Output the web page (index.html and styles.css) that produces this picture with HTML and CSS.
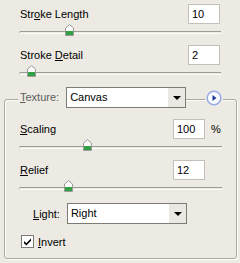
FILE: index.html
```html
<!DOCTYPE html>
<html>
<head>
    <title>Rough Pastels</title>
    <link rel="stylesheet" href="styles.css">
</head>
<body>
    <div class="panel">
        <div class="param">
            <div class="row">
                <label>Str<u>o</u>ke Length</label>
                <input class="num" type="text" value="10">
            </div>
            <div class="slider">
                <div class="track"></div>
                <span class="thumb" style="left: 46px"><svg width="9" height="12" viewBox="0 0 9 12"><path d="M4.5 .6 L8.5 4 V11.5 H.5 V4 Z" fill="#fafafa" stroke="#9a9a96"/><rect x="1" y="7" width="7" height="4" fill="#33a046"/></svg></span>
            </div>
        </div>
        <div class="param">
            <div class="row">
                <label>Stroke <u>D</u>etail</label>
                <input class="num" type="text" value="2">
            </div>
            <div class="slider">
                <div class="track"></div>
                <span class="thumb" style="left: 8px"><svg width="9" height="12" viewBox="0 0 9 12"><path d="M4.5 .6 L8.5 4 V11.5 H.5 V4 Z" fill="#fafafa" stroke="#9a9a96"/><rect x="1" y="7" width="7" height="4" fill="#33a046"/></svg></span>
            </div>
        </div>

        <div class="group">
            <div class="group-head">
                <span class="legend"><u>T</u>exture:</span>
                <div class="select">
                    <span class="select-value">Canvas</span>
                    <span class="select-arrow"></span>
                </div>
                <span class="spacer"></span>
                <span class="menu-btn">
                    <svg width="16" height="16" viewBox="0 0 16 16">
                        <circle cx="8" cy="8" r="6.8" fill="#fbfcff" stroke="#93aae4" stroke-width="1.4"/>
                        <path d="M6.5 5 L10.5 8 L6.5 11 Z" fill="#1b3a9c"/>
                    </svg>
                </span>
            </div>

            <div class="param first">
                <div class="row">
                    <label><u>S</u>caling</label>
                    <div class="num-wrap">
                        <input class="num" type="text" value="100">
                        <span class="unit">%</span>
                    </div>
                </div>
                <div class="slider">
                    <div class="track"></div>
                    <span class="thumb" style="left: 64px"><svg width="9" height="12" viewBox="0 0 9 12"><path d="M4.5 .6 L8.5 4 V11.5 H.5 V4 Z" fill="#fafafa" stroke="#9a9a96"/><rect x="1" y="7" width="7" height="4" fill="#33a046"/></svg></span>
                </div>
            </div>
            <div class="param">
                <div class="row">
                    <label><u>R</u>elief</label>
                    <div class="num-wrap">
                        <input class="num" type="text" value="12">
                        <span class="unit"></span>
                    </div>
                </div>
                <div class="slider">
                    <div class="track"></div>
                    <span class="thumb" style="left: 45px"><svg width="9" height="12" viewBox="0 0 9 12"><path d="M4.5 .6 L8.5 4 V11.5 H.5 V4 Z" fill="#fafafa" stroke="#9a9a96"/><rect x="1" y="7" width="7" height="4" fill="#33a046"/></svg></span>
                </div>
            </div>

            <div class="light-row">
                <label><u>L</u>ight:</label>
                <div class="select">
                    <span class="select-value">Right</span>
                    <span class="select-arrow"></span>
                </div>
            </div>

            <div class="check-row">
                <span class="checkbox">
                    <svg width="11" height="11" viewBox="0 0 11 11">
                        <path d="M2 5 L4.3 7.3 L9 2.5 L9 4.8 L4.3 9.5 L2 7.2 Z" fill="#000"/>
                    </svg>
                </span>
                <label><u>I</u>nvert</label>
            </div>
        </div>
    </div>
</body>
</html>
```

FILE: styles.css
```css
body {
    margin: 0;
    padding: 0;
    font-family: "Liberation Sans", Arial, sans-serif;
    font-size: 11px;
    color: #000;
    background-color: #eceae3;
    overflow: hidden;
}

u {
    text-underline-offset: 1px;
}

.panel {
    width: 240px;
    height: 263px;
    box-sizing: border-box;
    padding: 4px 19px 0 19px;
}

.param {
    display: flex;
    flex-direction: column;
}

.row {
    display: flex;
    justify-content: space-between;
    align-items: center;
    height: 20px;
}

.row label {
    padding-left: 1px;
}

.num {
    width: 32px;
    height: 20px;
    box-sizing: border-box;
    margin: 0 1px 0 0;
    padding: 0 0 0 3px;
    border: 1px solid #c2c0b8;
    background: #fff;
    font-family: "Liberation Sans", Arial, sans-serif;
    font-size: 11px;
    color: #000;
    outline: none;
}

.num-wrap {
    display: flex;
    align-items: center;
}

.num-wrap .num {
    margin-right: 0;
}

.unit {
    width: 17px;
    padding-left: 6px;
    box-sizing: border-box;
}

.slider {
    position: relative;
    height: 21px;
}

.track {
    position: absolute;
    top: 7px;
    left: 0;
    right: 0;
    height: 1px;
    border-top: 1px solid #9c9b96;
    border-bottom: 1px solid #fbfbf9;
    border-left: 1px solid #bdbcb6;
    border-radius: 2px 0 0 2px;
}

.thumb {
    position: absolute;
    top: 0;
    display: flex;
    width: 9px;
    height: 12px;
}

.group {
    margin: 13px -16px 0 -15px;
    padding: 0 14px 10px 14px;
    border: 1px solid #a9a8a1;
    border-radius: 3px;
    box-shadow: 1px 1px 0 #fdfdfb, inset 1px 1px 0 #fdfdfb;
}

.group-head {
    display: flex;
    align-items: center;
    height: 21px;
    margin: -13px -1px 0 -1px;
}

.legend {
    background-color: #eceae3;
    color: #5c5c5c;
    padding: 0 7px 0 2px;
    line-height: 21px;
}

.select {
    display: flex;
    width: 120px;
    height: 21px;
    box-sizing: border-box;
    border: 1px solid #7c7b76;
    background: #fff;
}

.select-value {
    flex-grow: 1;
    padding-left: 3px;
    line-height: 19px;
}

.select-arrow {
    width: 17px;
    background-color: #e9e8e3;
    position: relative;
}

.select-arrow::after {
    content: "";
    position: absolute;
    left: 5px;
    top: 8px;
    border-left: 4px solid transparent;
    border-right: 4px solid transparent;
    border-top: 4px solid #000;
}

.spacer {
    flex-grow: 1;
}

.menu-btn {
    display: flex;
    background-color: #eceae3;
    padding: 0 1px;
}

.param.first {
    margin-top: 11px;
}

.light-row {
    display: flex;
    align-items: center;
    margin-top: 2px;
    padding-left: 14px;
    gap: 7px;
}

.check-row {
    display: flex;
    align-items: center;
    margin-top: 11px;
    padding-left: 2px;
    gap: 4px;
    height: 13px;
}

.checkbox {
    display: flex;
    align-items: center;
    justify-content: center;
    width: 13px;
    height: 13px;
    box-sizing: border-box;
    border: 1px solid #7a7a76;
    background: #fff;
}
```
